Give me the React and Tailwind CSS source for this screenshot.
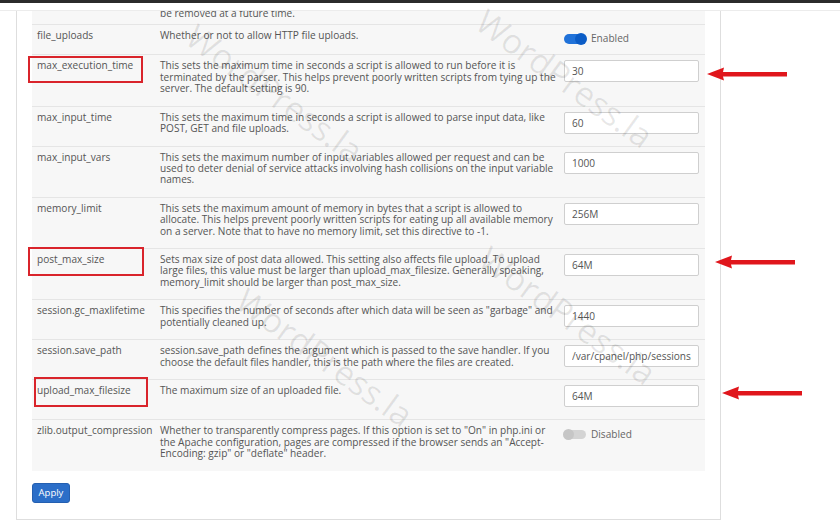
import React from "react";

const rows = [
  {
    name: "file_uploads",
    lines: ["Whether or not to allow HTTP file uploads."],
    toggle: true,
  },
  {
    name: "max_execution_time",
    lines: [
      "This sets the maximum time in seconds a script is allowed to run before it is",
      "terminated by the parser. This helps prevent poorly written scripts from tying up the",
      "server. The default setting is 90.",
    ],
    value: "30",
    box: "left-[-4px] top-[1px] w-[115px] h-[27px]",
  },
  {
    name: "max_input_time",
    lines: [
      "This sets the maximum time in seconds a script is allowed to parse input data, like",
      "POST, GET and file uploads.",
    ],
    value: "60",
  },
  {
    name: "max_input_vars",
    lines: [
      "This sets the maximum number of input variables allowed per request and can be",
      "used to deter denial of service attacks involving hash collisions on the input variable",
      "names.",
    ],
    value: "1000",
  },
  {
    name: "memory_limit",
    lines: [
      "This sets the maximum amount of memory in bytes that a script is allowed to",
      "allocate. This helps prevent poorly written scripts for eating up all available memory",
      "on a server. Note that to have no memory limit, set this directive to -1.",
    ],
    value: "256M",
  },
  {
    name: "post_max_size",
    lines: [
      "Sets max size of post data allowed. This setting also affects file upload. To upload",
      "large files, this value must be larger than upload_max_filesize. Generally speaking,",
      "memory_limit should be larger than post_max_size.",
    ],
    value: "64M",
    box: "left-[-4px] top-[-2px] w-[116px] h-[29px]",
  },
  {
    name: "session.gc_maxlifetime",
    lines: [
      'This specifies the number of seconds after which data will be seen as "garbage" and',
      "potentially cleaned up.",
    ],
    value: "1440",
  },
  {
    name: "session.save_path",
    lines: [
      "session.save_path defines the argument which is passed to the save handler. If you",
      "choose the default files handler, this is the path where the files are created.",
    ],
    value: "/var/cpanel/php/sessions/ea-php74",
  },
  {
    name: "upload_max_filesize",
    lines: ["The maximum size of an uploaded file."],
    value: "64M",
    box: "left-[2px] top-[-3px] w-[114px] h-[30px]",
  },
  {
    name: "zlib.output_compression",
    lines: [
      'Whether to transparently compress pages. If this option is set to "On" in php.ini or',
      'the Apache configuration, pages are compressed if the browser sends an "Accept-',
      'Encoding: gzip" or "deflate" header.',
    ],
    toggle: false,
  },
];

const Toggle = ({ on }) => (
  <div className="inline-flex items-center gap-[5px] h-[12px]">
    {on ? (
      <span className="relative inline-flex items-center w-[22px] h-[10px] rounded-full bg-[#2072d9]">
        <span className="absolute right-[-1px] w-[12px] h-[12px] rounded-full bg-[#0b5cc6]" />
      </span>
    ) : (
      <span className="relative inline-flex items-center w-[22px] h-[9px] rounded-full bg-[#d4d4d4]">
        <span className="absolute left-[-1px] w-[11px] h-[11px] rounded-full bg-[#c6c6c6]" />
      </span>
    )}
    <span className="text-[#666]">{on ? "Enabled" : "Disabled"}</span>
  </div>
);

const Arrow = ({ className }) => (
  <svg className={`absolute ${className}`} width="80" height="14" viewBox="0 0 80 14">
    <path d="M0 7 L17 0.5 L16 5 L80 5 L80 9.5 L16 9.5 L17 13.5 Z" fill="#e0161c" />
  </svg>
);

const Watermark = ({ className }) => (
  <span
    className={`absolute -translate-x-1/2 -translate-y-1/2 rotate-[36deg] whitespace-nowrap text-[34px] leading-none text-black/[0.09] pointer-events-none ${className}`}
  >
    WordPress.la
  </span>
);

export default function App() {
  return (
    <div className="relative w-[840px] h-[521px] overflow-hidden bg-white font-['Open_Sans',sans-serif] text-[10.1px] leading-[11.4px] text-[#555]">
      <div className="ml-[16px] w-[705px] border-x border-b border-[#dedede] px-[15px] pb-[16px]">
        <div className="bg-[#f7f7f7]">
          {/* tail of the row scrolled under the header */}
          <div className="grid grid-cols-[123px_403px_147px] h-[24px]">
            <div />
            <div className="pl-[5px] pt-[8px] whitespace-nowrap">be removed at a future time.</div>
            <div />
          </div>

          {rows.map((r) => (
            <div key={r.name} className="grid grid-cols-[123px_403px_147px] border-t border-[#e5e5e5]">
              <div className="relative pl-[5px] pt-[5px] pb-[11px] whitespace-nowrap">
                {r.name}
                {r.box && <span className={`absolute border-2 border-[#d9242b] ${r.box}`} />}
              </div>
              <div className="pl-[5px] pt-[5px] pb-[11px] whitespace-nowrap">
                {r.lines.map((l, i) => (
                  <div key={i}>{l}</div>
                ))}
              </div>
              {r.value !== undefined ? (
                <div className="pl-[6px] pt-[5px] pb-[12px]">
                  <input
                    readOnly
                    value={r.value}
                    className="block w-[135px] h-[22px] px-[7px] bg-white border border-[#cfcfcf] rounded-[2px] text-[#555] outline-none"
                  />
                </div>
              ) : (
                <div className="pl-[6px] pt-[8px] pb-[8px]">
                  <Toggle on={r.toggle} />
                </div>
              )}
            </div>
          ))}
        </div>

        <button className="mt-[12px] w-[38px] h-[20px] rounded-[3px] bg-[#2b6ec8] border border-[#245fb0] text-white text-[9.5px]">
          Apply
        </button>
      </div>

      {/* fixed header edge */}
      <div className="absolute top-0 left-0 right-0 h-[11px] bg-white border-b border-[#ececec]">
        <div className="h-[3px] bg-[#2b2b2b]" />
      </div>

      <Watermark className="left-[275px] top-[93px]" />
      <Watermark className="left-[565px] top-[78px]" />
      <Watermark className="left-[325px] top-[357px]" />
      <Watermark className="left-[568px] top-[315px]" />

      <Arrow className="left-[707px] top-[67px]" />
      <Arrow className="left-[715px] top-[255px]" />
      <Arrow className="left-[722px] top-[386px]" />
    </div>
  );
}
